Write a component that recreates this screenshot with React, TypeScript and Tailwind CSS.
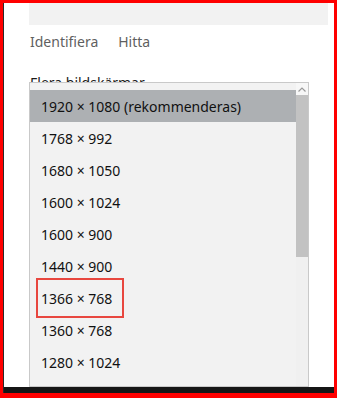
const resolutions = [
  "1920 × 1080 (rekommenderas)",
  "1768 × 992",
  "1680 × 1050",
  "1600 × 1024",
  "1600 × 900",
  "1440 × 900",
  "1366 × 768",
  "1360 × 768",
  "1280 × 1024",
];

export default function App() {
  return (
    <div
      className="w-[337px] h-[398px] bg-[#ff0000] pt-[3px] pl-[3px] pr-[3px] pb-[5px] overflow-hidden"
      style={{ fontFamily: '"Noto Sans", "Open Sans", sans-serif' }}
    >
      <div className="relative w-full h-full bg-white border-l border-[#2a2a2a] flex flex-col overflow-hidden">
        {/* top gray box */}
        <div className="ml-[25px] mr-[6px] h-[22px] bg-[#f2f2f2]" />

        {/* links */}
        <div className="ml-[26px] mt-[7px] flex gap-[20px] text-[14px] text-[#5f5f5f] leading-[20px]">
          <span>Identifiera</span>
          <span>Hitta</span>
        </div>

        {/* label */}
        <div className="ml-[26px] mt-[21px] text-[14px] text-[#1a1a1a] leading-[20px]">
          Flera bildskärmar
        </div>

        {/* dropdown popup */}
        <div className="absolute left-[25px] top-[79px] w-[280px] bottom-[6px] bg-[#f2f2f2] border border-[#c9c9c9] flex overflow-hidden">
          <div className="flex-1 pt-[7px] flex flex-col">
            {resolutions.map((r, i) => (
              <div
                key={r}
                className={
                  "h-[32px] shrink-0 flex items-center pl-[11px] text-[14px] text-[#111] " +
                  (i === 0 ? "bg-[#adb0b3]" : "")
                }
              >
                {i === 6 ? (
                  <span className="-ml-[5px] pl-[3px] pr-[10px] h-[40px] shrink-0 flex items-center border-2 border-[#e8473f]">
                    {r}
                  </span>
                ) : (
                  r
                )}
              </div>
            ))}
          </div>
          {/* scrollbar */}
          <div className="w-[12px] flex flex-col bg-[#f0f0f0]">
            <div className="h-[12px] bg-[#f7f7f7] flex items-center justify-center">
              <svg width="8" height="5" viewBox="0 0 8 5" fill="none">
                <path d="M0.5 4.5 L4 1 L7.5 4.5" stroke="#9a9a9a" strokeWidth="1.2" />
              </svg>
            </div>
            <div className="h-[162px] bg-[#c2c2c2]" />
          </div>
        </div>

        {/* bottom dark band */}
        <div className="absolute left-0 right-0 bottom-0 h-[6px] bg-[#161616]" />
      </div>
    </div>
  );
}
